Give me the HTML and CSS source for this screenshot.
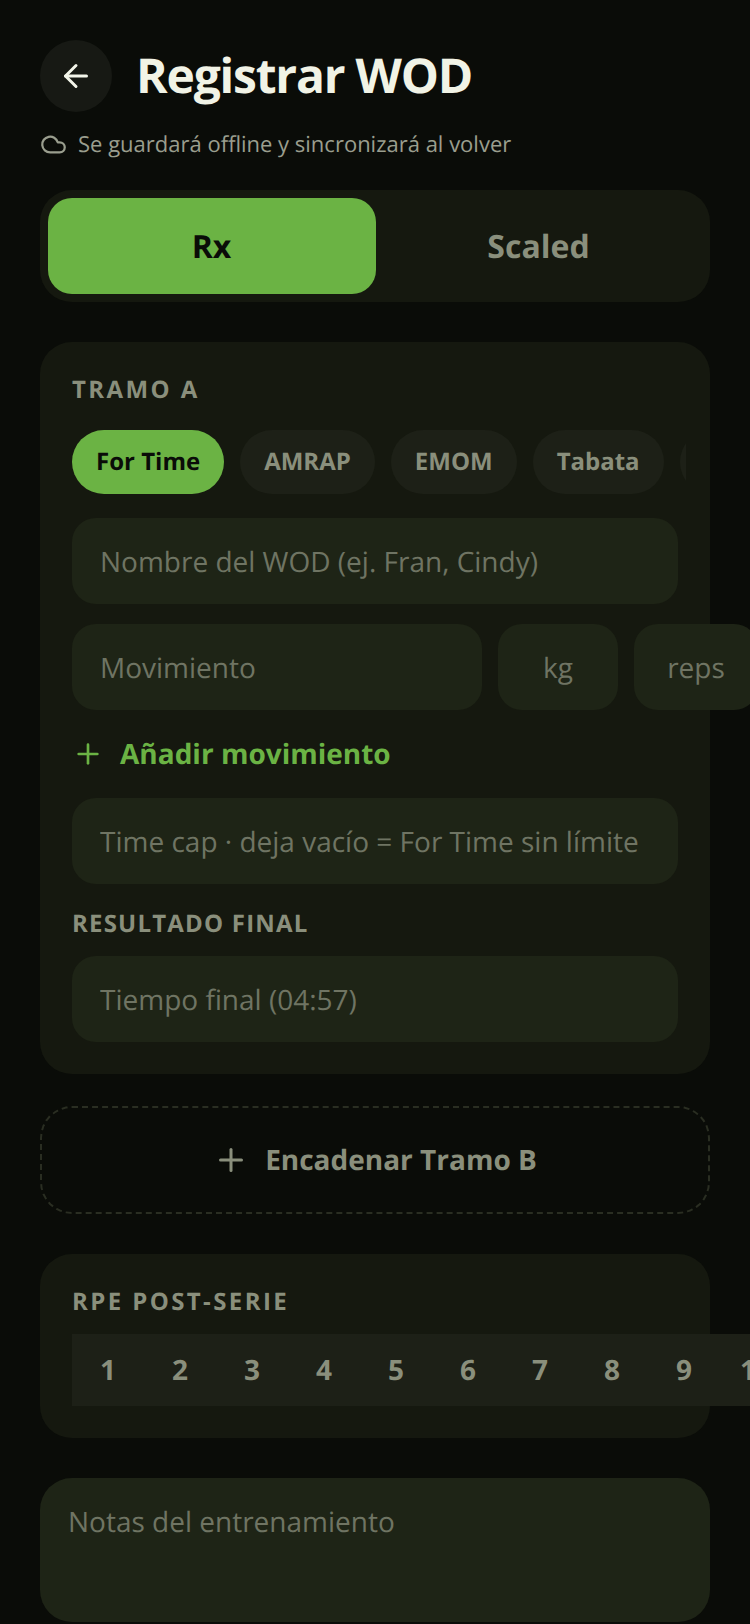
FILE: index.html
```html
<!DOCTYPE html>
<html lang="es">
<head>
    <meta charset="UTF-8">
    <meta name="viewport" content="width=device-width, initial-scale=1.0">
    <title>Registrar WOD</title>
    <link rel="stylesheet" href="styles.css">
</head>
<body>
    <div class="screen">
        <header class="header">
            <button class="back" type="button" aria-label="Volver">
                <svg class="icon-back" viewBox="0 0 24 24"><path d="M19 12H5"/><path d="M12 19l-7-7 7-7"/></svg>
            </button>
            <h1>Registrar WOD</h1>
        </header>
        <p class="offline">
            <svg class="icon-cloud" viewBox="0 0 24 24"><path d="M17.5 19H9a7 7 0 1 1 6.71-9h1.79a4.5 4.5 0 1 1 0 9Z"/></svg>
            Se guardará offline y sincronizará al volver
        </p>

        <div class="toggle">
            <button class="toggle-btn active" type="button">Rx</button>
            <button class="toggle-btn" type="button">Scaled</button>
        </div>

        <section class="card tramo">
            <div class="label">TRAMO A</div>
            <div class="chips">
                <button class="chip active" type="button">For Time</button>
                <button class="chip" type="button">AMRAP</button>
                <button class="chip" type="button">EMOM</button>
                <button class="chip" type="button">Tabata</button>
                <button class="chip" type="button">Chipper</button>
            </div>
            <input class="field" type="text" placeholder="Nombre del WOD (ej. Fran, Cindy)">
            <div class="move-row">
                <input class="field move" type="text" placeholder="Movimiento">
                <input class="field small" type="text" placeholder="kg">
                <input class="field small reps" type="text" placeholder="reps">
            </div>
            <button class="add-move" type="button">
                <svg class="icon-add" viewBox="0 0 24 24"><path d="M5 12h14"/><path d="M12 5v14"/></svg>
                Añadir movimiento
            </button>
            <input class="field" type="text" placeholder="Time cap · deja vacío = For Time sin límite">
            <div class="label label-result">RESULTADO FINAL</div>
            <input class="field" type="text" placeholder="Tiempo final (04:57)">
        </section>

        <button class="chain" type="button">
            <svg class="icon-chain" viewBox="0 0 24 24"><path d="M5 12h14"/><path d="M12 5v14"/></svg>
            Encadenar Tramo B
        </button>

        <section class="card rpe">
            <div class="label">RPE POST-SERIE</div>
            <div class="rpe-track">
                <span>1</span><span>2</span><span>3</span><span>4</span><span>5</span>
                <span>6</span><span>7</span><span>8</span><span>9</span><span>10</span>
            </div>
        </section>

        <textarea class="notes" placeholder="Notas del entrenamiento"></textarea>
    </div>
</body>
</html>
```

FILE: styles.css
```css
* {
    box-sizing: border-box;
}
html, body {
    margin: 0;
    padding: 0;
    height: 100%;
    overflow: hidden;
    background-color: #0a0c08;
}
body {
    font-family: "Open Sans", sans-serif;
    color: #8a8f7c;
    text-rendering: geometricPrecision;
}
button, input, textarea {
    font-family: inherit;
    text-rendering: inherit;
    border: none;
    outline: none;
}
button {
    cursor: pointer;
}
svg {
    fill: none;
    stroke: currentColor;
    stroke-linecap: round;
    stroke-linejoin: round;
    flex-shrink: 0;
}
.screen {
    width: 750px;
    height: 1624px;
    padding: 40px 40px 0;
}
.header {
    display: flex;
    align-items: center;
    gap: 24px;
}
.back {
    width: 72px;
    height: 72px;
    padding: 0;
    border-radius: 50%;
    background-color: #171914;
    color: #f3f5ea;
    display: flex;
    align-items: center;
    justify-content: center;
}
.icon-back {
    width: 36px;
    height: 36px;
    stroke-width: 2;
}
h1 {
    margin: 0;
    font-size: 48px;
    line-height: 72px;
    font-weight: 700;
    letter-spacing: -1.2px;
    color: #f1f3e6;
}
.offline {
    margin: 16px 0 0;
    display: flex;
    align-items: center;
    gap: 11px;
    font-size: 22px;
    line-height: 32px;
    color: #9a9e8e;
}
.icon-cloud {
    width: 27px;
    height: 27px;
    stroke-width: 2;
}
.toggle {
    margin-top: 30px;
    height: 112px;
    padding: 8px;
    display: flex;
    background-color: #15180f;
    border-radius: 32px;
}
.toggle-btn {
    flex: 1;
    padding: 0 1px 0 0;
    border-radius: 24px;
    background: transparent;
    font-size: 32px;
    font-weight: 700;
    color: #8a8f7c;
}
.toggle-btn.active {
    flex: 0 0 328px;
    background-color: #6bb344;
    color: #0a0c08;
}
.card {
    background-color: #15180f;
    border-radius: 32px;
    padding: 32px;
}
.tramo {
    margin-top: 40px;
}
.label {
    font-size: 24px;
    line-height: 31px;
    font-weight: 700;
    letter-spacing: 2.4px;
    color: #8a8f7c;
}
.label-result {
    margin: 24px 0 17px;
    letter-spacing: 1.2px;
}
.chips {
    margin: 25px -8px 24px 0;
    display: flex;
    gap: 16px;
    overflow: hidden;
}
.chip {
    flex-shrink: 0;
    height: 64px;
    padding: 0 24px 2px;
    border-radius: 32px;
    background-color: #1d2017;
    font-size: 24px;
    font-weight: 700;
    color: #8a8f7c;
}
.chip.active {
    background-color: #6bb344;
    color: #0a0c08;
}
.field {
    display: block;
    width: 100%;
    height: 86px;
    padding: 2px 28px 0;
    border-radius: 24px;
    background-color: #1e2416;
    font-size: 28px;
    color: #f3f5ea;
}
.field::placeholder, .notes::placeholder {
    color: #6f7463;
    opacity: 1;
}
.move-row {
    margin-top: 20px;
    display: flex;
    gap: 16px;
    width: 686px;
}
.move {
    width: 410px;
    flex-shrink: 0;
}
.small {
    width: 120px;
    flex-shrink: 0;
    padding: 2px 0 0;
    text-align: center;
}
.reps {
    width: 124px;
}
.add-move {
    margin: 20px 0;
    padding: 0;
    height: 48px;
    display: flex;
    align-items: center;
    gap: 16px;
    background: transparent;
    font-size: 28px;
    font-weight: 700;
    color: #6bb344;
}
.icon-add {
    width: 32px;
    height: 32px;
    stroke-width: 2;
}
.chain {
    margin-top: 32px;
    width: 100%;
    height: 108px;
    display: flex;
    align-items: center;
    justify-content: center;
    gap: 16px;
    background: transparent;
    border: 2px dashed #2a2e22;
    border-radius: 32px;
    font-size: 28px;
    font-weight: 700;
    color: #8a8f7c;
}
.icon-chain {
    width: 36px;
    height: 36px;
    stroke-width: 2;
}
.rpe {
    margin-top: 40px;
}
.rpe-track {
    margin-top: 17px;
    width: 720px;
    display: flex;
    background-color: #1d2017;
}
.rpe-track span {
    flex: 0 0 72px;
    height: 72px;
    display: flex;
    align-items: center;
    justify-content: center;
    font-size: 28px;
    font-weight: 700;
}
.notes {
    display: block;
    margin-top: 40px;
    width: 100%;
    height: 144px;
    padding: 25px 28px;
    resize: none;
    border-radius: 32px;
    background-color: #1e2416;
    font-size: 28px;
    line-height: 38px;
    color: #f3f5ea;
}
```
